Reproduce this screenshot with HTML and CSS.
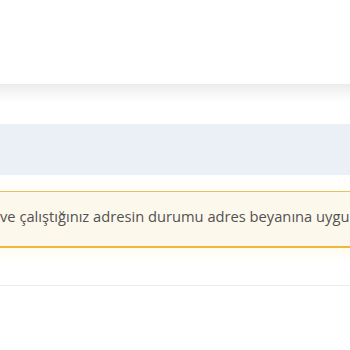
FILE: index.html
```html
<!DOCTYPE html>
<html lang="tr">
<head>
<meta charset="utf-8">
<link rel="stylesheet" href="styles.css">
</head>
<body>
<div class="page">
  <header class="top"></header>
  <div class="shadow"></div>
  <div class="band"></div>
  <div class="fade"></div>
  <div class="alert">
    <p class="alert-text">ve çalıştığınız adresin durumu adres beyanına uygun</p>
  </div>
  <div class="glow"></div>
  <div class="divider"></div>
</div>
</body>
</html>
```
FILE: styles.css
```css
html, body {
  margin: 0;
  padding: 0;
  background: #ffffff;
}
.page {
  width: 350px;
  height: 350px;
  overflow: hidden;
  display: flex;
  flex-direction: column;
}
.top {
  height: 84px;
  flex: none;
}
.shadow {
  height: 18px;
  flex: none;
  background: linear-gradient(#ebebeb, #f6f6f6 50%, #ffffff);
}
.band {
  margin-top: 22px;
  height: 51px;
  flex: none;
  background: #ebf0f6;
}
.fade {
  height: 16px;
  flex: none;
  background: linear-gradient(#ffffff, #fffdf6);
}
.alert {
  flex: none;
  height: 54px;
  box-sizing: content-box;
  border-top: 1px solid #e6c266;
  border-bottom: 2px solid #f1b53a;
  background: #fdf8ec;
  display: flex;
  align-items: center;
  overflow: hidden;
}
.alert-text {
  margin: 0 0 6px 0;
  white-space: nowrap;
  font-family: "Open Sans", sans-serif;
  font-size: 14.7px;
  color: #525252;
}
.glow {
  height: 14px;
  flex: none;
  background: linear-gradient(#fffbee, #ffffff);
}
.divider {
  margin-top: 23px;
  height: 1px;
  flex: none;
  background: #ebebeb;
}
```
